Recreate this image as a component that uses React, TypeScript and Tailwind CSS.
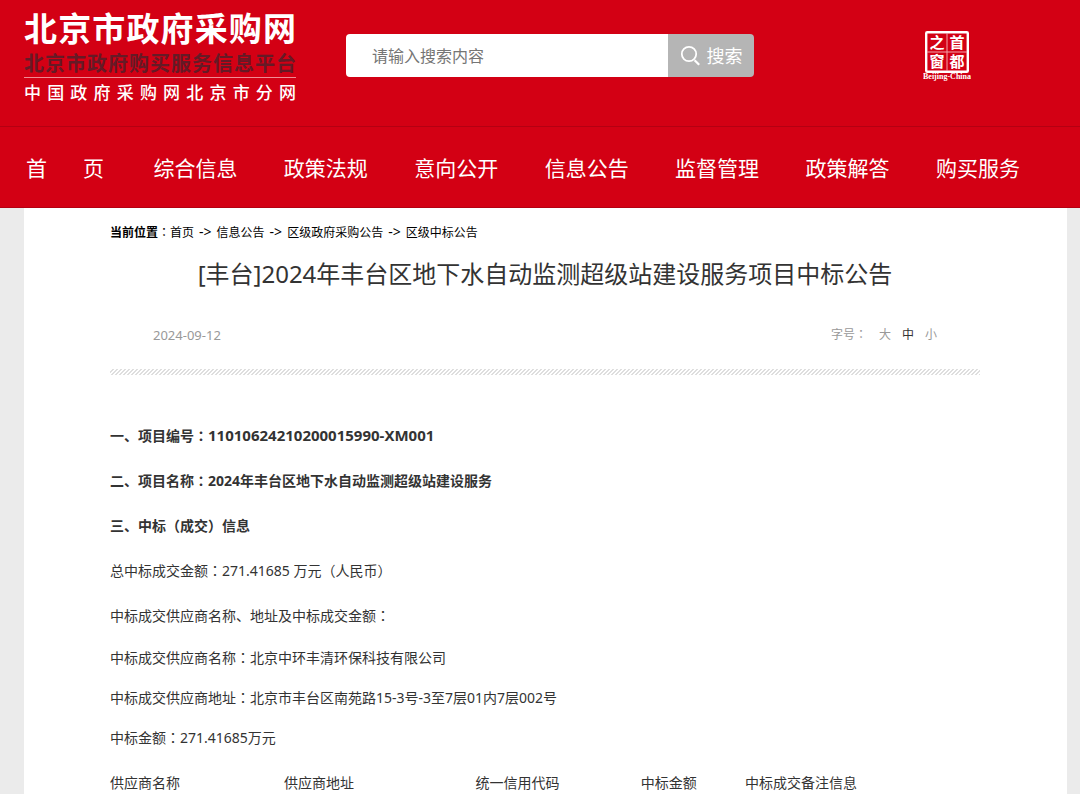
import type { ReactNode } from "react";

const navItems = ["综合信息", "政策法规", "意向公开", "信息公告", "监督管理", "政策解答", "购买服务"];

const crumbs = ["首页", "信息公告", "区级政府采购公告", "区级中标公告"];

/* Full-width colon drawn in the middle of its cell. */
function Colon() {
  return <span className="font-['Noto_Sans_CJK_TC',sans-serif] leading-none">：</span>;
}

function Field({ label, children }: { label: string; children?: ReactNode }) {
  return (
    <p>
      {label}
      <Colon />
      {children}
    </p>
  );
}

function SiteLogo() {
  return (
    <a href="#" className="block w-[272px] text-white">
      <span className="block text-[33px] font-bold leading-[38px] [text-align-last:justify]">北京市政府采购网</span>
      <span className="block pt-[3px] text-[20px] font-bold leading-[26px] text-[#651a26] [text-align-last:justify]">
        北京市政府购买服务信息平台
      </span>
      <span className="block border-t border-[#f08c94] pt-[3px] text-[17px] font-medium leading-[24px] [text-align-last:justify]">
        中国政府采购网北京市分网
      </span>
    </a>
  );
}

function CapitalSeal() {
  return (
    <a href="#" aria-label="首都之窗" className="block">
      <svg width="48" height="52" viewBox="0 0 48 52" fill="none">
        <rect x="3.2" y="2.2" width="41.6" height="39.6" rx="1" stroke="#fff" strokeWidth="2.4" />
        <path d="M24 3v38M4 22h40" stroke="#f3a3aa" strokeWidth="1" />
        <g fill="#fff" fontFamily="'Noto Sans CJK SC', sans-serif" fontSize="15" fontWeight="700" textAnchor="middle">
          <text x="14" y="18">之</text>
          <text x="34" y="18">首</text>
          <text x="14" y="37">窗</text>
          <text x="34" y="37">都</text>
        </g>
        <text
          x="24"
          y="49"
          fill="#fff"
          fontFamily="'Liberation Serif', serif"
          fontSize="8"
          fontWeight="700"
          textAnchor="middle"
        >
          Beijing-China
        </text>
      </svg>
    </a>
  );
}

function SearchBox() {
  return (
    <form className="flex h-[43px] w-[408px] overflow-hidden rounded" onSubmit={(e) => e.preventDefault()}>
      <input
        type="text"
        aria-label="搜索内容"
        placeholder="请输入搜索内容"
        className="min-w-0 flex-1 bg-white pl-[26px] pr-3 text-base text-gray-700 outline-none placeholder:text-[#757575]"
      />
      <button type="submit" className="flex w-[86px] items-center justify-center gap-1.5 bg-[#b5b5b5] text-lg text-white">
        <svg width="21" height="21" viewBox="0 0 21 21" fill="none" stroke="currentColor" strokeWidth="1.8">
          <circle cx="9" cy="9" r="7.2" />
          <path d="M14.6 15.2l4.6 4.6" strokeWidth="2.2" />
        </svg>
        搜索
      </button>
    </form>
  );
}

export default function App() {
  return (
    <div className="flex min-h-screen flex-col bg-[#ebebeb] font-['Noto_Sans','Noto_Sans_CJK_SC',sans-serif]">
      <header className="bg-[#d30014] text-white">
        <div className="flex h-[126px] items-start pl-6 pr-[109px]">
          <div className="pt-2.5">
            <SiteLogo />
          </div>
          <div className="ml-[50px] pt-[34px]">
            <SearchBox />
          </div>
          <div className="ml-auto pt-[30px]">
            <CapitalSeal />
          </div>
        </div>
        <nav className="flex h-[82px] items-center justify-between border-y border-[#b40012] pl-[23px] pr-[60px] pt-1 text-[21px]">
          <a href="#" className="flex w-[84px] justify-center gap-9">
            <span>首</span>
            <span>页</span>
          </a>
          {navItems.map((item) => (
            <a key={item} href="#">
              {item}
            </a>
          ))}
        </nav>
      </header>

      <main className="ml-6 mr-[13px] flex-1 bg-white pl-[86px] pr-[87px] pt-[13px]">
        <div className="text-xs leading-6 text-black">
          <b>当前位置</b>
          <Colon />
          {crumbs.map((crumb, i) => (
            <span key={crumb}>
              {i > 0 && <span className="px-[5px] text-sm leading-none">-&gt;</span>}
              <a href="#">{crumb}</a>
            </span>
          ))}
        </div>

        <h1 className="pt-[7px] text-center text-2xl leading-[44px] text-[#333]">
          [丰台]2024年丰台区地下水自动监测超级站建设服务项目中标公告
        </h1>

        <div className="flex items-center justify-between px-[43px] pb-[22px] pt-[26px] text-xs leading-6 text-[#999]">
          <span className="text-[13px]">2024-09-12</span>
          <div className="flex pt-px">
            <span>
              字号
              <Colon />
            </span>
            <div className="ml-3 flex gap-[11px]">
              <button type="button">大</button>
              <button type="button" className="text-[#333]">
                中
              </button>
              <button type="button">小</button>
            </div>
          </div>
        </div>

        <div className="h-1.5 bg-[linear-gradient(135deg,#fff_25%,#dedede_25%,#dedede_50%,#fff_50%,#fff_75%,#dedede_75%)] bg-[length:4px_4px]" />

        <article className="pt-[38px] text-sm text-[#333]">
          <div className="leading-[45px]">
            <div className="font-bold">
              <Field label="一、项目编号">
                <span className="text-[15px] leading-none">11010624210200015990-XM001</span>
              </Field>
              <Field label="二、项目名称">2024年丰台区地下水自动监测超级站建设服务</Field>
              <p>三、中标（成交）信息</p>
            </div>
            <Field label="总中标成交金额">271.41685 万元（人民币）</Field>
            <Field label="中标成交供应商名称、地址及中标成交金额" />
          </div>
          <div className="leading-10">
            <Field label="中标成交供应商名称">北京中环丰清环保科技有限公司</Field>
            <Field label="中标成交供应商地址">北京市丰台区南苑路15-3号-3至7层01内7层002号</Field>
            <Field label="中标金额">271.41685万元</Field>
          </div>
          <table className="w-full table-fixed text-left leading-[22px]">
            <thead>
              <tr className="[&>th]:p-0 [&>th]:pt-3.5 [&>th]:font-normal">
                <th className="w-[20%]">供应商名称</th>
                <th className="w-[22%]">供应商地址</th>
                <th className="w-[19%]">统一信用代码</th>
                <th className="w-[12%]">中标金额</th>
                <th className="w-[27%]">中标成交备注信息</th>
              </tr>
            </thead>
          </table>
        </article>
      </main>
    </div>
  );
}
